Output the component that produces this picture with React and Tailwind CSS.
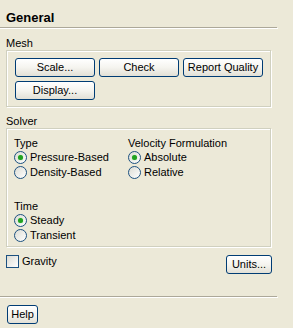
const font = { fontFamily: '"Liberation Sans", Arial, sans-serif' };

function Button({ children, className = "" }) {
  return (
    <button
      type="button"
      className={`flex h-[19px] items-center justify-center rounded-[3px] border border-[#003c74] bg-linear-to-b from-[#ffffff] via-[#f5f4ef] to-[#e2e0d6] text-[11px] leading-[13px] text-black ${className}`}
    >
      {children}
    </button>
  );
}

function Radio({ label, checked }) {
  return (
    <div className="flex h-[15px] items-center gap-[3px]">
      <span className="flex h-[13px] w-[13px] items-center justify-center rounded-full border border-[#1c5180] bg-linear-to-br from-[#dcdcd4] to-[#ffffff]">
        {checked ? <span className="h-[5px] w-[5px] rounded-full bg-[#21a121] shadow-[0_0_1px_#6fdc6f]" /> : null}
      </span>
      <span className="text-[11px] leading-[13px]">{label}</span>
    </div>
  );
}

function Separator() {
  return (
    <div className="w-[278px]">
      <div className="h-px w-[277px] bg-[#aca899]" />
      <div className="h-px w-[278px] bg-white" />
    </div>
  );
}

function Group({ label, children, className = "" }) {
  return (
    <div className={className}>
      <div className="ml-[6px] h-[13px] text-[11px] leading-[13px]">{label}</div>
      <div className="ml-[6px] w-[265px] border border-[#d0d0bf] shadow-[inset_1px_1px_0_#fff,1px_1px_0_#fff]">
        {children}
      </div>
    </div>
  );
}

export default function App() {
  return (
    <div className="h-[328px] w-[293px] overflow-hidden bg-[#ece9d8] text-black" style={font}>
      <div className="pl-[6px] pt-[10px] text-[13px] font-bold leading-[16px]">General</div>
      <div className="mt-px">
        <Separator />
      </div>

      <Group label="Mesh" className="mt-[8px]">
        <div className="flex flex-col gap-[4px] pb-[6px] pl-[8px] pt-[7px]">
          <div className="flex gap-[4px]">
            <Button className="w-[80px]">Scale...</Button>
            <Button className="w-[80px]">Check</Button>
            <Button className="w-[80px]">Report Quality</Button>
          </div>
          <Button className="w-[80px]">Display...</Button>
        </div>
      </Group>

      <Group label="Solver" className="mt-[8px]">
        <div className="flex flex-col pb-[3px] pl-[7px] pt-[7px]">
          <div className="flex">
            <div className="w-[114px]">
              <div className="text-[11px] leading-[14px]">Type</div>
              <Radio label="Pressure-Based" checked />
              <Radio label="Density-Based" />
            </div>
            <div>
              <div className="text-[11px] leading-[14px]">Velocity Formulation</div>
              <Radio label="Absolute" checked />
              <Radio label="Relative" />
            </div>
          </div>
          <div className="mt-[19px]">
            <div className="text-[11px] leading-[14px]">Time</div>
            <Radio label="Steady" checked />
            <Radio label="Transient" />
          </div>
        </div>
      </Group>

      <div className="mt-[8px] flex w-[272px] items-start justify-between pl-[6px]">
        <div className="flex items-center gap-[3px]">
          <span className="h-[13px] w-[13px] border border-[#1c5180] bg-linear-to-br from-[#dcdcd4] to-[#ffffff]" />
          <span className="text-[11px] leading-[13px]">Gravity</span>
        </div>
        <Button className="w-[46px]">Units...</Button>
      </div>

      <div className="mt-[22px]">
        <Separator />
      </div>

      <div className="mt-[7px] pl-[7px]">
        <Button className="w-[31px]">Help</Button>
      </div>
    </div>
  );
}
